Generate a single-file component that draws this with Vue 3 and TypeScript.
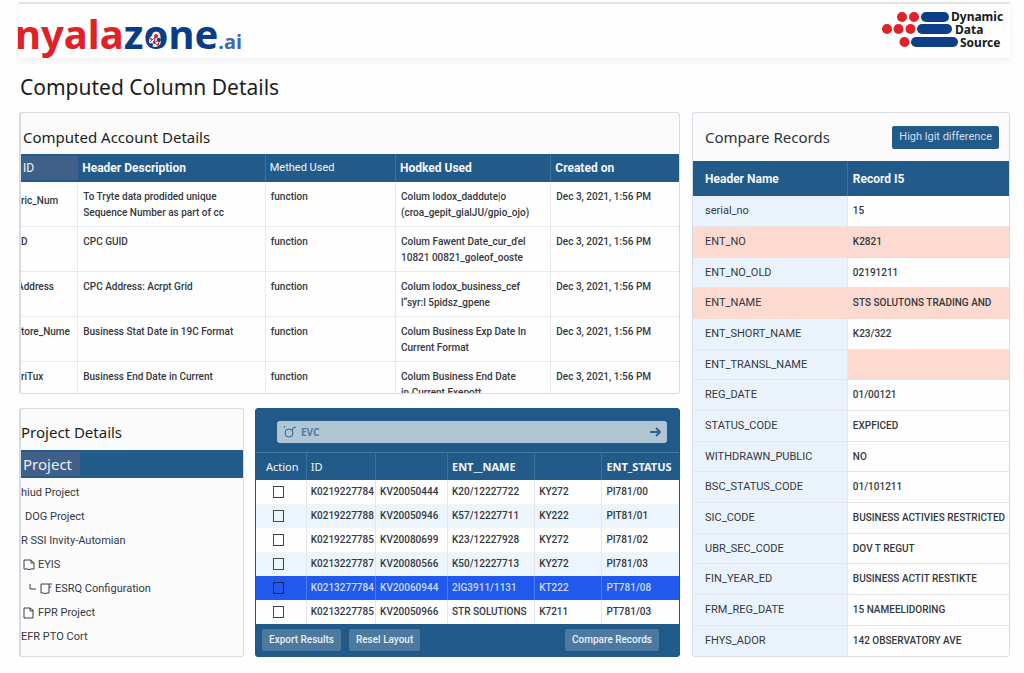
<script setup lang="ts">
import { ref } from 'vue'

interface Account {
  id: string
  clipped?: boolean
  description: string[]
  method: string
  used: string[]
  created: string
}

interface ResultRow {
  id: string
  code: string
  name: string
  ref: string
  status: string
  selected?: boolean
}

interface CompareRow {
  name: string
  value: string
  diff?: 'row' | 'value'
}

interface ProjectNode {
  label: string
  level: 'root' | 'inset' | 'folder' | 'child'
  icon?: 'doc' | 'chat' | 'wide'
}

const created = 'Dec 3, 2021, 1:56 PM'

const accounts: Account[] = [
  { id: 'ric_Num', description: ['To Tryte data prodided unique', 'Sequence Number as part of cc'], method: 'function', used: ['Colum lodox_daddute|o', '(croa_gepit_gialJU/gpio_ojo)'], created },
  { id: 'D', description: ['CPC GUID'], method: 'function', used: ['Colum Fawent Date_cur_ďel', '10821 00821_goleof_ooste'], created },
  { id: 'Address', clipped: true, description: ['CPC Address: Acrpt Grid'], method: 'function', used: ['Colum lodox_business_cef', 'l“syr:l 5pidsz_gpene'], created },
  { id: 'tore_Nume', description: ['Business Stat Date in 19C Format'], method: 'function', used: ['Colum Business Exp Date In', 'Current Format'], created },
  { id: 'riTux', description: ['Business End Date in Current'], method: 'function', used: ['Colum Business End Date', 'in Current Exepott'], created },
]

const projects: ProjectNode[] = [
  { label: 'hiud Project', level: 'root' },
  { label: 'DOG Project', level: 'inset' },
  { label: 'R SSI Invity-Automian', level: 'root' },
  { label: 'EYIS', level: 'folder', icon: 'chat' },
  { label: 'ESRQ Configuration', level: 'child', icon: 'wide' },
  { label: 'FPR Project', level: 'folder', icon: 'doc' },
  { label: 'EFR PTO Cort', level: 'root' },
]

const results: ResultRow[] = [
  { id: 'K0219227784', code: 'KV20050444', name: 'K20/12227722', ref: 'KY272', status: 'PI781/00' },
  { id: 'K0219227788', code: 'KV20050946', name: 'K57/12227711', ref: 'KY222', status: 'PIT81/01' },
  { id: 'K0219227785', code: 'KV20080699', name: 'K23/12227928', ref: 'KY272', status: 'PI781/02' },
  { id: 'K0213227787', code: 'KV20080566', name: 'K50/12227713', ref: 'KY272', status: 'PI781/03' },
  { id: 'K0213277784', code: 'KV20060944', name: '2IG3911/1131', ref: 'KT222', status: 'PT781/08', selected: true },
  { id: 'K0213227785', code: 'KV20050966', name: 'STR SOLUTIONS', ref: 'K7211', status: 'PT781/03' },
]

const compareRows: CompareRow[] = [
  { name: 'serial_no', value: '15' },
  { name: 'ENT_NO', value: 'K2821', diff: 'row' },
  { name: 'ENT_NO_OLD', value: '02191211' },
  { name: 'ENT_NAME', value: 'STS SOLUTONS TRADING AND', diff: 'row' },
  { name: 'ENT_SHORT_NAME', value: 'K23/322' },
  { name: 'ENT_TRANSL_NAME', value: '', diff: 'value' },
  { name: 'REG_DATE', value: '01/00121' },
  { name: 'STATUS_CODE', value: 'EXPFICED' },
  { name: 'WITHDRAWN_PUBLIC', value: 'NO' },
  { name: 'BSC_STATUS_CODE', value: '01/101211' },
  { name: 'SIC_CODE', value: 'BUSINESS ACTIVIES RESTRICTED' },
  { name: 'UBR_SEC_CODE', value: 'DOV T REGUT' },
  { name: 'FIN_YEAR_ED', value: 'BUSINESS ACTIT RESTIKTE' },
  { name: 'FRM_REG_DATE', value: '15 NAMEELIDORING' },
  { name: 'FHYS_ADOR', value: '142 OBSERVATORY AVE' },
]

const query = ref('EVC')
const checked = ref<string[]>([])
</script>

<template>
  <div class="page">
    <header class="topbar">
      <div class="brand">
        <span class="brand-red">nyala</span><span class="brand-blue">z<span class="brand-o">o<svg class="brand-net" viewBox="0 0 16 16" aria-hidden="true">
          <circle cx="8" cy="8" r="6" fill="#fff" />
          <path d="M3 9 8 4 13 6 11 12 7 10 4 12M8 4 7 10 13 6" fill="none" stroke="#e02127" stroke-width="1" />
          <circle cx="9" cy="3" r="2" fill="#e02127" />
          <circle cx="12" cy="7" r="2" fill="#0b3d86" />
          <circle cx="11" cy="12" r="1" fill="#e02127" />
          <circle cx="7" cy="9" r="1" fill="#0b3d86" />
          <circle cx="4" cy="12" r="2" fill="#0b3d86" />
          <circle cx="4" cy="6" r="1" fill="#e02127" />
        </svg></span>ne</span><span class="brand-tld">.ai</span>
      </div>
      <svg class="dds" viewBox="0 0 128 40" role="img" aria-label="Dynamic Data Source">
        <g fill="#e02127">
          <circle cx="21" cy="7" r="5" /><circle cx="33" cy="7" r="5" />
          <circle cx="6" cy="19" r="5" /><circle cx="17.500" cy="19" r="5" /><circle cx="29.500" cy="19" r="5" />
          <circle cx="23.500" cy="32" r="5" />
        </g>
        <g fill="#0d3f86">
          <rect x="40" y="2" width="28" height="10" rx="5" />
          <rect x="36" y="14" width="35" height="10" rx="5" />
          <rect x="30" y="27" width="47" height="10" rx="5" />
        </g>
        <g class="dds-text">
          <text x="70" y="11">Dynamic</text>
          <text x="74" y="24">Data</text>
          <text x="79" y="37">Source</text>
        </g>
      </svg>
    </header>

    <h1>Computed Column Details</h1>

    <main class="layout">
      <div class="left">
        <section class="panel account">
          <h2>Computed Account Details</h2>
          <div class="viewport">
            <table class="account-table">
              <colgroup>
                <col class="c-id"><col class="c-desc"><col class="c-method"><col class="c-used"><col class="c-created">
              </colgroup>
              <thead>
                <tr>
                  <th class="plain id-head"><span>ID</span></th>
                  <th>Header Description</th>
                  <th class="plain">Methed Used</th>
                  <th>Hodked Used</th>
                  <th>Created on</th>
                </tr>
              </thead>
              <tbody>
                <tr v-for="a in accounts" :key="a.id">
                  <td class="id-cell" :class="{ clipped: a.clipped }">{{ a.id }}</td>
                  <td><div v-for="line in a.description" :key="line">{{ line }}</div></td>
                  <td>{{ a.method }}</td>
                  <td><div v-for="line in a.used" :key="line">{{ line }}</div></td>
                  <td>{{ a.created }}</td>
                </tr>
              </tbody>
            </table>
          </div>
        </section>

        <div class="bottom">
          <section class="panel projects">
            <h2>Project Details</h2>
            <div class="project-head"><span>Project</span></div>
            <ul>
              <li v-for="p in projects" :key="p.label" :class="p.level">
                <svg v-if="p.level === 'child'" class="elbow" viewBox="0 0 8 12" aria-hidden="true"><path d="M1 1V6H7" /></svg>
                <svg v-if="p.icon === 'chat'" class="tree-icon" viewBox="0 0 12 14" aria-hidden="true"><path d="M1 2H8L11 5V11H7L6 12L5 11H1ZM8 2V5H11" /></svg>
                <svg v-if="p.icon === 'wide'" class="tree-icon" viewBox="0 0 12 14" aria-hidden="true"><path d="M9 2H1V11H4L5 12L6 11H9V2H12M9 5H11" /></svg>
                <svg v-if="p.icon === 'doc'" class="tree-icon" viewBox="0 0 12 14" aria-hidden="true"><path d="M1 2H7L10 4V12H1ZM7 2V5H10" /></svg>
                <span>{{ p.label }}</span>
              </li>
            </ul>
          </section>

          <section class="results">
            <form class="search" role="search" @submit.prevent>
              <svg class="search-icon" viewBox="0 0 14 14" aria-hidden="true"><circle cx="6" cy="8" r="4" /><path d="M9 5 10 3 13 2M1 1 2 3" /></svg>
              <input v-model="query" type="text" aria-label="Search records">
              <button type="submit" aria-label="Run search">
                <svg viewBox="0 0 12 12" aria-hidden="true"><path d="M1 6H11M7 2 11 6 7 10" /></svg>
              </button>
            </form>
            <table class="results-table">
              <colgroup>
                <col class="r-action"><col class="r-id"><col class="r-code"><col class="r-name"><col class="r-ref"><col class="r-status">
              </colgroup>
              <thead>
                <tr>
                  <th class="plain action">Action</th>
                  <th class="plain">ID</th>
                  <th></th>
                  <th>ENT__NAME</th>
                  <th></th>
                  <th>ENT_STATUS</th>
                </tr>
              </thead>
              <tbody>
                <tr v-for="r in results" :key="r.id" :class="{ selected: r.selected }">
                  <td class="check"><input v-model="checked" type="checkbox" :value="r.id" :aria-label="'Select ' + r.id"></td>
                  <td>{{ r.id }}</td>
                  <td>{{ r.code }}</td>
                  <td>{{ r.name }}</td>
                  <td>{{ r.ref }}</td>
                  <td>{{ r.status }}</td>
                </tr>
              </tbody>
            </table>
            <footer class="actions">
              <button type="button">Export Results</button>
              <button type="button">Resel Layout</button>
              <button type="button" class="push">Compare Records</button>
            </footer>
          </section>
        </div>
      </div>

      <section class="panel compare">
        <div class="compare-top">
          <h2>Compare Records</h2>
          <button type="button">High lgit difference</button>
        </div>
        <table class="compare-table">
          <colgroup><col class="k-name"><col></colgroup>
          <thead>
            <tr><th>Header Name</th><th>Record I5</th></tr>
          </thead>
          <tbody>
            <tr v-for="c in compareRows" :key="c.name" :class="c.diff ? 'diff-' + c.diff : ''">
              <td>{{ c.name }}</td>
              <td>{{ c.value }}</td>
            </tr>
          </tbody>
        </table>
      </section>
    </main>
  </div>
</template>

<style>
body {
  margin: 0;
  background: #fefefe;
}
</style>

<style scoped>
.page {
  box-sizing: border-box;
  padding: 2px 14px 16px 19px;
  font-family: Roboto, "Liberation Sans", sans-serif;
  font-size: 11px;
  line-height: 16px;
  color: #343840;
}
.page * {
  box-sizing: border-box;
}
h1,
h2 {
  margin: 0;
  font-family: "Noto Sans", sans-serif;
  font-weight: 400;
  color: #1c1d20;
}
h1 {
  padding: 13px 1px 9px;
  font-size: 21px;
  line-height: 32px;
}
h2 {
  font-size: 15px;
  line-height: 20px;
}
button {
  border: 0;
  font: inherit;
  cursor: pointer;
}
table {
  width: 100%;
  border-collapse: separate;
  border-spacing: 0;
  table-layout: fixed;
}
th,
td {
  padding: 0;
  text-align: left;
  white-space: nowrap;
}
th {
  background: #225b8a;
  color: #f3f7fb;
  font-size: 12px;
  font-weight: 700;
}
th.plain {
  font-weight: 400;
}

/* Top bar */
.topbar {
  display: flex;
  justify-content: space-between;
  align-items: flex-start;
  height: 56px;
  border-top: 2px solid #e3e3e4;
  background: #fefefe;
  box-shadow: 0 3px 6px #f0f0f2;
}
.brand {
  margin-left: -4px;
  padding-top: 4px;
  font-family: "Noto Sans", sans-serif;
  font-size: 40px;
  font-weight: 700;
  line-height: 52px;
  white-space: nowrap;
}
.brand-red {
  color: #e02127;
}
.brand-blue {
  color: #0b3d86;
}
.brand-o {
  position: relative;
}
.brand-net {
  position: absolute;
  left: 4px;
  bottom: 12px;
  width: 16px;
  height: 16px;
}
.brand-tld {
  color: #3c68b4;
  font-size: 20px;
}
.dds {
  width: 128px;
  height: 40px;
  margin: 6px 1px 0 0;
  overflow: visible;
}
.dds-text {
  font-family: "Noto Sans", sans-serif;
  font-size: 12px;
  font-weight: 700;
  fill: #17181b;
}

/* Layout */
.layout {
  display: grid;
  grid-template-columns: 661fr 318fr;
  gap: 12px;
  align-items: stretch;
}
.left {
  display: flex;
  flex-direction: column;
  gap: 14px;
  min-width: 0;
}
.bottom {
  display: grid;
  grid-template-columns: 225fr 425fr;
  gap: 11px;
}
.panel {
  min-width: 0;
  overflow: hidden;
  border: 1px solid #d6dbe4;
  border-radius: 3px;
  background: #fbfbfc;
}

/* Account table */
.account {
  border-left: 2px solid #d9dadd;
}
.account h2 {
  padding: 14px 2px 7px;
}
.viewport {
  height: 239px;
  overflow: hidden;
  background: #fefefe;
}
.c-id { width: 8.7%; }
.c-desc { width: 28.5%; }
.c-method { width: 19.8%; }
.c-used { width: 23.6%; }
.c-created { width: 19.4%; }
.account-table th {
  height: 28px;
  padding-left: 4px;
  border-right: 1px solid #3f719a;
}
.account-table th:last-child {
  border-right: 0;
}
.account-table th.plain {
  font-size: 11px;
}
.account-table th.id-head {
  padding: 0;
  border-right: 0;
}
.id-head span {
  display: block;
  padding-left: 2px;
  background: #40608a;
  font-size: 12px;
  line-height: 24px;
}
.account-table td {
  height: 45px;
  padding: 7px 0 5px 5px;
  border-right: 1px solid #e9eaec;
  border-bottom: 1px solid #e9eaec;
  font-size: 10px;
  font-weight: 500;
  vertical-align: top;
}
.account-table td:last-child {
  border-right: 0;
}
.account-table td.id-cell {
  padding-left: 0;
  overflow: hidden;
}
.account-table tr:first-child td.id-cell {
  padding-top: 11px;
  padding-bottom: 1px;
}
.account-table td.clipped {
  text-indent: -4px;
}

/* Projects */
.projects {
  border-left: 2px solid #d9dadd;
}
.projects h2 {
  padding: 13px 0 8px;
}
.project-head {
  background: #225b8a;
  color: #e9eff6;
  font-family: "Noto Sans", sans-serif;
  font-size: 15px;
  line-height: 24px;
  padding: 2px 0;
}
.project-head span {
  display: inline-block;
  padding: 0 8px 0 2px;
  background: #40608a;
}
.projects ul {
  margin: 0;
  padding: 3px 0 4px;
  list-style: none;
}
.projects li {
  display: flex;
  align-items: center;
  gap: 3px;
  height: 24px;
}
.projects li.inset {
  padding-left: 4px;
}
.projects li.folder {
  padding-left: 2px;
}
.projects li.child {
  padding-left: 8px;
}
.tree-icon {
  width: 12px;
  height: 14px;
}
.elbow {
  width: 8px;
  height: 12px;
}
.tree-icon path,
.elbow path {
  fill: none;
  stroke: #3a3f4a;
  stroke-width: 1;
}

/* Results */
.results {
  min-width: 0;
  overflow: hidden;
  border: 1px solid #1f5785;
  border-radius: 3px;
  background: #225b8a;
}
.search {
  display: flex;
  align-items: center;
  height: 22px;
  margin: 12px 12px 9px 21px;
  padding: 0 6px;
  border-radius: 3px;
  background: #b1c6d5;
}
.search-icon {
  width: 14px;
  height: 14px;
}
.search svg {
  fill: none;
  stroke: #2d648f;
  stroke-width: 1;
}
.search input {
  flex: 1;
  min-width: 0;
  padding: 0 4px;
  border: 0;
  outline: 0;
  background: transparent;
  color: #4d7c9f;
  font-family: "Noto Sans", sans-serif;
  font-size: 10px;
  font-weight: 700;
}
.search button {
  display: flex;
  padding: 0;
  background: transparent;
}
.search button svg {
  width: 12px;
  height: 12px;
  stroke-width: 2;
}
.r-action { width: 12%; }
.r-id { width: 16.4%; }
.r-code { width: 17%; }
.r-name { width: 20.6%; }
.r-ref { width: 15.9%; }
.r-status { width: 18.1%; }
.results-table th {
  height: 28px;
  padding-left: 4px;
  border-top: 1px solid #4c7aa1;
  border-right: 1px solid #3f719a;
  font-size: 11px;
  font-family: "Noto Sans", sans-serif;
}
.results-table td {
  height: 24px;
  padding-left: 4px;
  border-right: 1px solid #e3e6ea;
  background: #fefefe;
  font-size: 10px;
  font-weight: 500;
}
.results-table th:last-child,
.results-table td:last-child {
  border-right: 0;
}
.results-table th.action {
  padding-left: 10px;
}
.results-table tr:nth-child(even) td {
  background: #edf5fc;
}
.results-table tr:last-child td {
  background: #fefefe;
}
.results-table tr.selected td {
  border-right-color: #4a7bf3;
  background: #2059ec;
  color: #c9dafc;
}
.results-table td.check {
  padding-left: 17px;
}
.check input {
  display: block;
  width: 11px;
  height: 12px;
  margin: 0;
  border: 1px solid #3d424d;
  appearance: none;
}
.check input:checked {
  background: #225b8a;
}
.selected .check input {
  border-color: #12264f;
}
.actions {
  display: flex;
  gap: 8px;
  padding: 5px 20px 5px 6px;
}
.actions button {
  height: 22px;
  padding: 0 7px;
  border-radius: 2px;
  background: #4c799f;
  color: #eaf1f7;
  font-size: 10px;
  font-weight: 500;
}
.actions .push {
  margin-left: auto;
}

/* Compare */
.compare-top {
  display: flex;
  justify-content: space-between;
  align-items: center;
  height: 48px;
  padding: 0 10px 0 12px;
}
.compare-top h2 {
  color: #2b3340;
}
.compare-top button {
  height: 23px;
  padding: 0 7px;
  border-radius: 2px;
  background: #225b8a;
  color: #cfdfec;
}
.k-name { width: 49%; }
.compare-table th {
  height: 35px;
  padding-left: 5px;
}
.compare-table td {
  height: 31px;
  padding-left: 5px;
  border-bottom: 1px solid #e5e8eb;
  background: #fefefe;
  font-size: 10px;
  font-weight: 500;
}
.compare-table tr:nth-child(3n) td {
  height: 30px;
}
.compare-table th:first-child,
.compare-table td:first-child {
  padding-left: 12px;
  border-right: 1px solid #e2e8ef;
}
.compare-table th:first-child {
  border-right-color: #3f719a;
}
.compare-table td:first-child {
  background: #eaf3fb;
  font-size: 11px;
  font-weight: 400;
}
.compare-table .diff-row td,
.compare-table .diff-row td:first-child,
.compare-table .diff-value td:last-child {
  border-color: #f8d9ce;
  background: #fcdacf;
}
.compare-table tr:last-child td {
  border-bottom: 0;
}
</style>
